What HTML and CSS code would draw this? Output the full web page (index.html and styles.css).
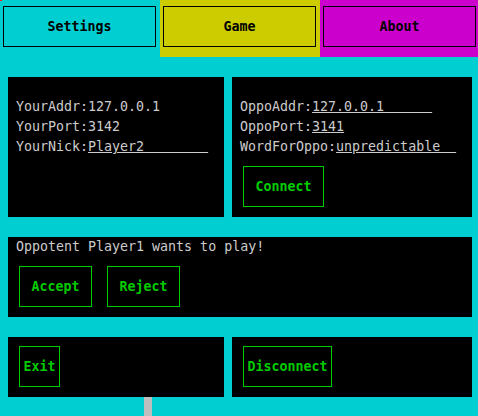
FILE: index.html
```html
<!DOCTYPE html>
<html>
<head>
<meta charset="utf-8">
<link rel="stylesheet" href="styles.css">
</head>
<body>
<span class="dot"></span>
<nav class="tabs">
  <div class="tab tab-settings"><button class="tab-btn">Settings</button></div>
  <div class="tab tab-game"><button class="tab-btn">Game</button></div>
  <div class="tab tab-about"><button class="tab-btn">About</button></div>
</nav>
<main class="grid">
  <section class="panel panel-top">
    <div class="line">YourAddr:127.0.0.1</div>
    <div class="line">YourPort:3142</div>
    <div class="line">YourNick:<span class="field">Player2        </span></div>
  </section>
  <section class="panel panel-top">
    <div class="line">OppoAddr:<span class="field">127.0.0.1      </span></div>
    <div class="line">OppoPort:<span class="field">3141</span></div>
    <div class="line">WordForOppo:<span class="field">unpredictable  </span></div>
    <div class="btns"><button class="btn">Connect</button></div>
  </section>
  <section class="panel panel-wide">
    <div class="line">Oppotent Player1 wants to play!</div>
    <div class="btns"><button class="btn">Accept</button><button class="btn">Reject</button></div>
  </section>
  <section class="panel panel-bottom">
    <div class="btns"><button class="btn btn-tight">Exit</button></div>
  </section>
  <section class="panel panel-bottom">
    <div class="btns"><button class="btn btn-tight">Disconnect</button></div>
  </section>
</main>
<div class="stub"></div>
</body>
</html>
```

FILE: styles.css
```css
* { box-sizing: border-box; }
html, body { margin: 0; padding: 0; }
body {
  background: #00ced1;
  font-family: "DejaVu Sans Mono", monospace;
  font-size: 13.3px;
  width: 478px;
  height: 416px;
  overflow: hidden;
  position: relative;
}
.dot {
  position: absolute;
  left: 0;
  top: 0;
  width: 2px;
  height: 1px;
  background: #ff2020;
}
.tabs {
  display: grid;
  grid-template-columns: 160px 160px 158px;
  height: 57px;
}
.tab {
  padding: 6px 3px 10px 3px;
}
.tab-settings { background: #00ced1; }
.tab-game { background: #cccc00; }
.tab-about { background: #cc00cc; }
.tab-btn {
  display: flex;
  align-items: center;
  justify-content: center;
  width: 153px;
  height: 41px;
  background: transparent;
  border: 1px solid #000;
  font-family: "DejaVu Sans Mono", monospace;
  font-size: 13.3px;
  font-weight: bold;
  color: #000;
  padding: 0;
}
.grid {
  display: grid;
  grid-template-columns: 216px 240px;
  column-gap: 8px;
  row-gap: 20px;
  margin: 20px 6px 0 8px;
}
.panel {
  background: #000;
  color: #cccccc;
  padding: 0 8px;
}
.panel-top { height: 140px; padding-top: 20px; }
.panel-wide { grid-column: 1 / 3; height: 80px; padding-top: 0; }
.panel-bottom { height: 60px; }
.line {
  line-height: 20px;
  white-space: pre;
}
.field {
  text-decoration: underline;
  text-underline-offset: 1px;
}
.btns {
  display: flex;
  gap: 15px;
  margin: 9px 0 0 3px;
}
.btn {
  height: 41px;
  padding: 0 11.5px;
  background: #000;
  border: 1px solid #00cc00;
  color: #00cc00;
  font-family: "DejaVu Sans Mono", monospace;
  font-size: 13.3px;
  font-weight: bold;
}
.btn-tight { padding: 0 3.5px; }
.stub {
  width: 8px;
  height: 19px;
  margin-left: 144px;
  background: #bebebe;
}
```
